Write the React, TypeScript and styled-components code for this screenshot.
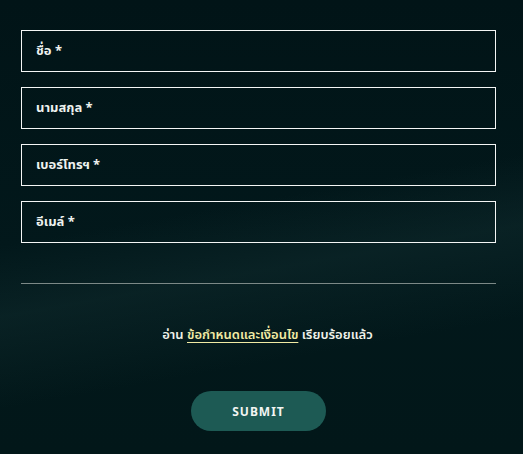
import React from "react";
import styled, { createGlobalStyle } from "styled-components";

const Global = createGlobalStyle`
  html, body { margin: 0; padding: 0; }
  body {
    width: 523px;
    height: 454px;
    overflow: hidden;
    font-family: "Noto Sans", "Noto Sans Thai", "Liberation Sans", sans-serif;
  }
`;

const Page = styled.div`
  box-sizing: border-box;
  width: 523px;
  height: 454px;
  padding: 30px 27px 0 21px;
  background:
    linear-gradient(170deg, transparent 45%, rgba(22, 52, 54, 0.35) 58%, transparent 75%),
    linear-gradient(180deg, #011417 0%, #02181b 55%, #021719 100%);
  display: flex;
  flex-direction: column;
`;

const Fields = styled.div`
  display: flex;
  flex-direction: column;
  gap: 15px;
`;

const Field = styled.div`
  box-sizing: border-box;
  height: 42px;
  border: 1px solid #f4f6f5;
  display: flex;
  align-items: center;
  padding: 0 14px;
  color: #eef2ef;
  font-size: 13px;
  font-weight: 700;
`;

const Divider = styled.div`
  margin-top: 40px;
  height: 1px;
  background: #7c8987;
`;

const Terms = styled.p`
  margin: 40px 0 0;
  padding-left: 18px;
  text-align: center;
  color: #f0f2ea;
  font-size: 13px;
  font-weight: 600;
  line-height: 20px;
`;

const Link = styled.a`
  color: #f1eba4;
  text-decoration: underline;
  text-underline-offset: 3px;
`;

const ButtonRow = styled.div`
  display: flex;
  justify-content: center;
  margin-top: 47px;
`;

const Submit = styled.button`
  width: 135px;
  height: 40px;
  border: none;
  border-radius: 20px;
  background: #1d5a54;
  color: #f2f5f2;
  font-family: "Noto Sans", "Liberation Sans", sans-serif;
  font-size: 12px;
  font-weight: 700;
  letter-spacing: 1px;
  cursor: pointer;
`;

export default function App() {
  const fields = ["ชื่อ *", "นามสกุล *", "เบอร์โทรฯ *", "อีเมล์ *"];
  return (
    <>
      <Global />
      <Page>
        <Fields>
          {fields.map((f) => (
            <Field key={f}>{f}</Field>
          ))}
        </Fields>
        <Divider />
        <Terms>
          อ่าน <Link href="#">ข้อกำหนดและเงื่อนไข</Link> เรียบร้อยแล้ว
        </Terms>
        <ButtonRow>
          <Submit>SUBMIT</Submit>
        </ButtonRow>
      </Page>
    </>
  );
}
